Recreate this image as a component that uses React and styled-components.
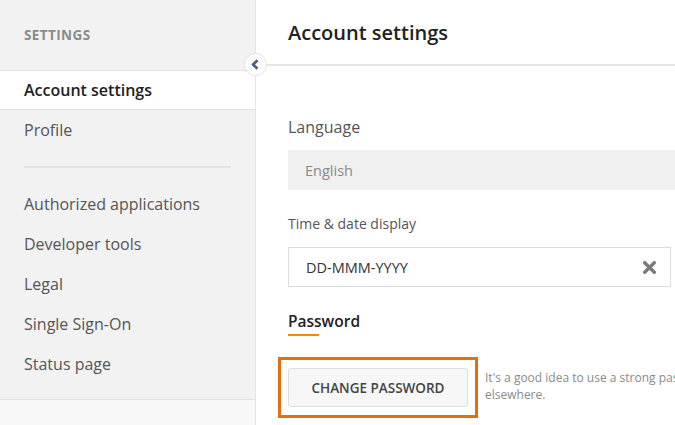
import React from 'react'
import styled, { createGlobalStyle } from 'styled-components'

const GlobalStyle = createGlobalStyle`
  html, body {
    margin: 0;
    padding: 0;
    background: #ffffff;
  }
  body {
    font-family: 'Open Sans', 'Lato', sans-serif;
    color: #333333;
    overflow: hidden;
  }
`

const Page = styled.div`
  display: flex;
  width: 675px;
  height: 425px;
  overflow: hidden;
`

const Sidebar = styled.aside`
  display: flex;
  flex-direction: column;
  width: 255px;
  flex-shrink: 0;
  border-right: 1px solid #e4e4e4;
`

const SidebarNav = styled.nav`
  display: flex;
  flex-direction: column;
  height: 400px;
  box-sizing: border-box;
  background: #f2f2f2;
  border-bottom: 1px solid #e2e2e2;
`

const SidebarFoot = styled.div`
  flex: 1;
  background: #f8f8f8;
`

const SidebarTitle = styled.div`
  height: 70px;
  padding: 0 24px;
  display: flex;
  align-items: center;
  font-size: 13.5px;
  font-weight: 700;
  letter-spacing: 0.4px;
  color: #8a8a8a;
  text-transform: uppercase;
`

const NavItem = styled.a`
  display: flex;
  align-items: center;
  height: 40px;
  padding: 0 24px;
  box-sizing: border-box;
  font-size: 16px;
  color: ${p => (p.active ? '#222222' : '#555555')};
  font-weight: ${p => (p.active ? 600 : 400)};
  background: ${p => (p.active ? '#ffffff' : 'transparent')};
  border-top: 1px solid ${p => (p.active ? '#e2e2e2' : 'transparent')};
  border-bottom: 1px solid ${p => (p.active ? '#e2e2e2' : 'transparent')};
  cursor: pointer;
`

const NavDivider = styled.hr`
  margin: 16px 24px;
  border: none;
  height: 2px;
  background: #e2e2e2;
`

const Main = styled.main`
  position: relative;
  flex: 1;
  min-width: 0;
`

const Header = styled.header`
  height: 64px;
  padding: 0 32px;
  display: flex;
  align-items: center;
  border-bottom: 2px solid #e6e6e6;
`

const Title = styled.h1`
  margin: 0;
  font-size: 20px;
  font-weight: 600;
  color: #222222;
`

const CollapseToggle = styled.button`
  position: absolute;
  left: -12px;
  top: 53px;
  width: 23px;
  height: 23px;
  padding: 0;
  border-radius: 50%;
  border: 1px solid #e2e2e2;
  background: #ffffff;
  display: flex;
  align-items: center;
  justify-content: center;
  cursor: pointer;
`

const Content = styled.div`
  width: 620px;
  padding: 51px 32px 0;
`

const Label = styled.div`
  font-size: ${p => p.size || 16}px;
  line-height: 20px;
  color: #555555;
  margin-top: ${p => p.top || 0}px;
`

const ReadOnlyField = styled.div`
  margin-top: 13px;
  height: 40px;
  padding: 0 17px;
  display: flex;
  align-items: center;
  background: #f0f0f0;
  font-size: 14.5px;
  color: #8a8a8a;
`

const Select = styled.div`
  margin-top: 13px;
  width: 383px;
  height: 40px;
  box-sizing: border-box;
  padding: 0 13px 0 17px;
  display: flex;
  align-items: center;
  justify-content: space-between;
  border: 1px solid #dcdcdc;
  background: #ffffff;
  font-size: 14.5px;
  color: #333333;
`

const SectionTitle = styled.h2`
  margin: 24px 0 0;
  font-size: 15.5px;
  line-height: 20px;
  font-weight: 600;
  color: #222222;
  &::after {
    content: '';
    display: block;
    width: 31px;
    height: 2px;
    margin-top: 3px;
    background: #f58a07;
  }
`

const PasswordRow = styled.div`
  display: flex;
  align-items: flex-start;
  margin: 21px 0 0 -10px;
`

const Highlight = styled.div`
  flex-shrink: 0;
  padding: 8px 7px;
  border: 3px solid #e46f0e;
`

const Button = styled.button`
  width: 180px;
  height: 39px;
  border: 1px solid #dedede;
  border-radius: 3px;
  background: #f7f7f7;
  font-family: inherit;
  font-size: 13.5px;
  font-weight: 600;
  color: #444444;
  text-transform: uppercase;
  cursor: pointer;
`

const Hint = styled.p`
  margin: 12px 0 0 7px;
  width: 400px;
  font-size: 12px;
  line-height: 17px;
  color: #8a8a8a;
`

const ChevronLeft = () => (
  <svg width="11" height="11" viewBox="0 0 10 10">
    <path d="M6.8 1.2 L2.8 5 L6.8 8.8" fill="none" stroke="#4a5f85" strokeWidth="2.6" strokeLinejoin="round" />
  </svg>
)

const ClearIcon = () => (
  <svg width="15" height="15" viewBox="0 0 14 14">
    <path d="M2.5 2.5 L11.5 11.5 M11.5 2.5 L2.5 11.5" stroke="#7a7a7a" strokeWidth="3.2" strokeLinecap="round" />
  </svg>
)

const navItems = ['Authorized applications', 'Developer tools', 'Legal', 'Single Sign-On', 'Status page']

export default function App() {
  return (
    <>
      <GlobalStyle />
      <Page>
        <Sidebar>
          <SidebarNav>
            <SidebarTitle>Settings</SidebarTitle>
            <NavItem active>Account settings</NavItem>
            <NavItem>Profile</NavItem>
            <NavDivider />
            {navItems.map(item => (
              <NavItem key={item}>{item}</NavItem>
            ))}
          </SidebarNav>
          <SidebarFoot />
        </Sidebar>
        <Main>
          <CollapseToggle aria-label="Collapse sidebar">
            <ChevronLeft />
          </CollapseToggle>
          <Header>
            <Title>Account settings</Title>
          </Header>
          <Content>
            <Label>Language</Label>
            <ReadOnlyField>English</ReadOnlyField>
            <Label size={14} top={24}>Time &amp; date display</Label>
            <Select>
              <span>DD-MMM-YYYY</span>
              <ClearIcon />
            </Select>
            <SectionTitle>Password</SectionTitle>
            <PasswordRow>
              <Highlight>
                <Button>Change password</Button>
              </Highlight>
              <Hint>
                It's a good idea to use a strong password that you're not using elsewhere.
              </Hint>
            </PasswordRow>
          </Content>
        </Main>
      </Page>
    </>
  )
}
